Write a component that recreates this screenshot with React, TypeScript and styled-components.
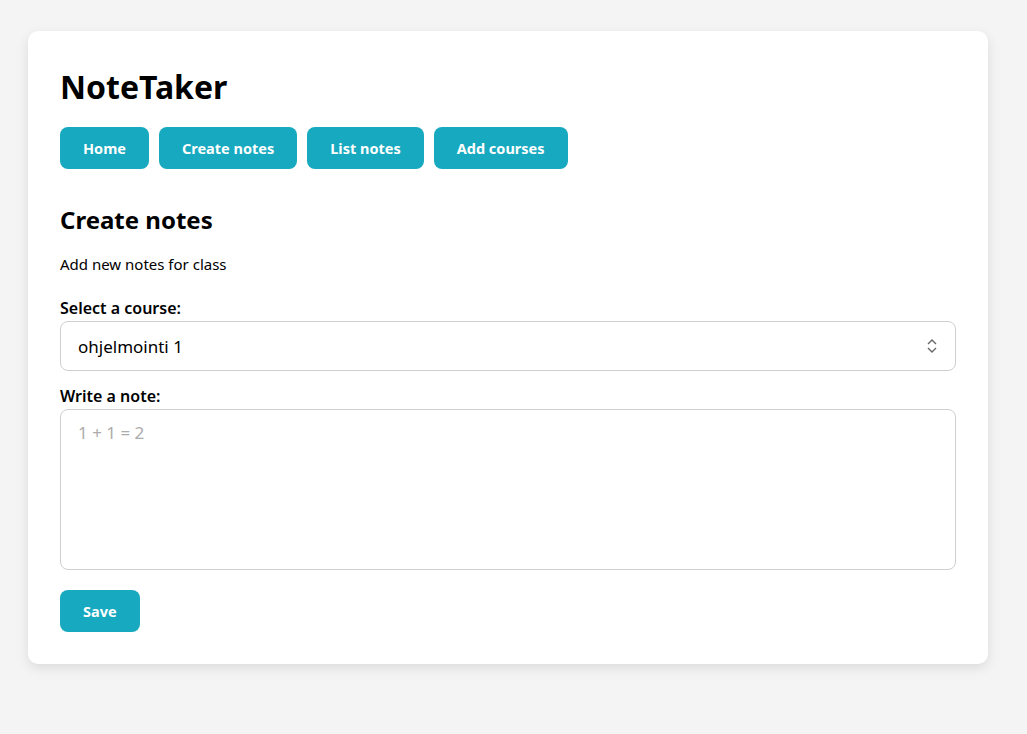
import styled, { createGlobalStyle } from "styled-components";

const GlobalStyle = createGlobalStyle`
  body {
    margin: 0;
    background-color: #f4f4f4;
    font-family: "Noto Sans", "Open Sans", sans-serif;
    color: #000;
  }
`;

const Page = styled.div`
  padding: 31px 39px 70px 28px;
`;

const Card = styled.div`
  background-color: #fff;
  border-radius: 10px;
  box-shadow: 0 4px 12px rgba(0, 0, 0, 0.1);
  padding: 28px 32px 32px;
`;

const Title = styled.h1`
  font-size: 32px;
  font-weight: 700;
  margin: 0 0 12px;
  line-height: 56px;
`;

const Nav = styled.nav`
  display: flex;
  gap: 10px;
`;

const Button = styled.button`
  height: 42px;
  padding: 0 23px;
  border: none;
  border-radius: 8px;
  background-color: #17a9bf;
  color: #fff;
  font-family: inherit;
  font-size: 14.5px;
  font-weight: 700;
  cursor: pointer;
`;

const Heading = styled.h2`
  font-size: 24px;
  font-weight: 700;
  margin: 34px 0 0;
  line-height: 34px;
`;

const Lead = styled.p`
  font-size: 15px;
  margin: 16px 0 0;
  line-height: 22px;
`;

const Field = styled.div<{ $top: number }>`
  display: flex;
  flex-direction: column;
  margin-top: ${(p) => p.$top}px;
`;

const Label = styled.label`
  font-size: 16px;
  font-weight: 600;
  line-height: 22px;
  margin-bottom: 2px;
`;

const SelectWrap = styled.div`
  position: relative;
`;

const Select = styled.select`
  width: 100%;
  height: 50px;
  appearance: none;
  border: 1px solid #cfcfcf;
  border-radius: 8px;
  background: #fff;
  padding: 0 40px 0 17px;
  font-family: inherit;
  font-size: 17px;
  color: #000;
`;

const Chevron = styled.svg`
  position: absolute;
  right: 18px;
  top: 16px;
  pointer-events: none;
`;

const TextArea = styled.textarea`
  width: 100%;
  box-sizing: border-box;
  height: 161px;
  border: 1px solid #cfcfcf;
  border-radius: 8px;
  padding: 11px 17px;
  font-family: inherit;
  font-size: 17px;
  resize: none;
  display: block;
  &::placeholder {
    color: #acacac;
  }
`;

const SaveButton = styled(Button)`
  margin-top: 20px;
  align-self: flex-start;
`;

const Form = styled.div`
  display: flex;
  flex-direction: column;
`;

export default function App() {
  return (
    <>
      <GlobalStyle />
      <Page>
        <Card>
          <Title>NoteTaker</Title>
          <Nav>
            <Button>Home</Button>
            <Button>Create notes</Button>
            <Button>List notes</Button>
            <Button>Add courses</Button>
          </Nav>
          <Heading>Create notes</Heading>
          <Lead>Add new notes for class</Lead>
          <Form>
            <Field $top={22}>
              <Label>Select a course:</Label>
              <SelectWrap>
                <Select defaultValue="1">
                  <option value="1">ohjelmointi 1</option>
                </Select>
                <Chevron width="12" height="18" viewBox="0 0 12 18">
                  <path d="M2 7 L6 3 L10 7 M2 11 L6 15 L10 11" fill="none" stroke="#666" strokeWidth="1.4" />
                </Chevron>
              </SelectWrap>
            </Field>
            <Field $top={14}>
              <Label>Write a note:</Label>
              <TextArea placeholder="1 + 1 = 2" />
            </Field>
            <SaveButton>Save</SaveButton>
          </Form>
        </Card>
      </Page>
    </>
  );
}
